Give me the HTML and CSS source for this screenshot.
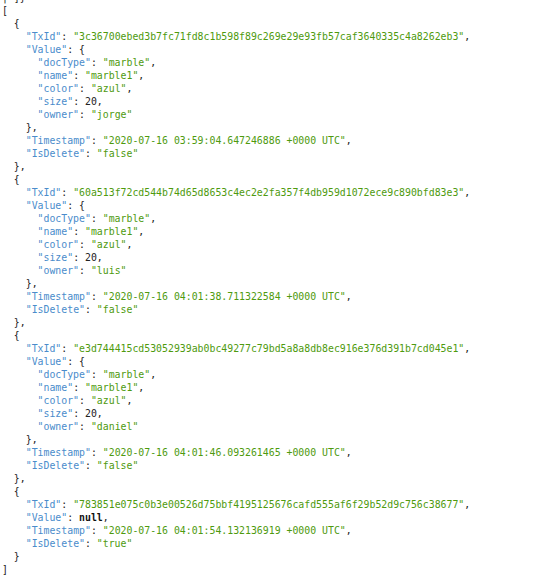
FILE: index.html
```html
<!DOCTYPE html>
<html>
<head>
<meta charset="utf-8">
<link rel="stylesheet" href="styles.css">
</head>
<body>
<pre class="json"><span class="cut">| ]}</span>
[
  {
    <span class="k">"TxId"</span>: <span class="s">"3c36700ebed3b7fc71fd8c1b598f89c269e29e93fb57caf3640335c4a8262eb3"</span>,
    <span class="k">"Value"</span>: {
      <span class="k">"docType"</span>: <span class="s">"marble"</span>,
      <span class="k">"name"</span>: <span class="s">"marble1"</span>,
      <span class="k">"color"</span>: <span class="s">"azul"</span>,
      <span class="k">"size"</span>: 20,
      <span class="k">"owner"</span>: <span class="s">"jorge"</span>
    },
    <span class="k">"Timestamp"</span>: <span class="s">"2020-07-16 03:59:04.647246886 +0000 UTC"</span>,
    <span class="k">"IsDelete"</span>: <span class="s">"false"</span>
  },
  {
    <span class="k">"TxId"</span>: <span class="s">"60a513f72cd544b74d65d8653c4ec2e2fa357f4db959d1072ece9c890bfd83e3"</span>,
    <span class="k">"Value"</span>: {
      <span class="k">"docType"</span>: <span class="s">"marble"</span>,
      <span class="k">"name"</span>: <span class="s">"marble1"</span>,
      <span class="k">"color"</span>: <span class="s">"azul"</span>,
      <span class="k">"size"</span>: 20,
      <span class="k">"owner"</span>: <span class="s">"luis"</span>
    },
    <span class="k">"Timestamp"</span>: <span class="s">"2020-07-16 04:01:38.711322584 +0000 UTC"</span>,
    <span class="k">"IsDelete"</span>: <span class="s">"false"</span>
  },
  {
    <span class="k">"TxId"</span>: <span class="s">"e3d744415cd53052939ab0bc49277c79bd5a8a8db8ec916e376d391b7cd045e1"</span>,
    <span class="k">"Value"</span>: {
      <span class="k">"docType"</span>: <span class="s">"marble"</span>,
      <span class="k">"name"</span>: <span class="s">"marble1"</span>,
      <span class="k">"color"</span>: <span class="s">"azul"</span>,
      <span class="k">"size"</span>: 20,
      <span class="k">"owner"</span>: <span class="s">"daniel"</span>
    },
    <span class="k">"Timestamp"</span>: <span class="s">"2020-07-16 04:01:46.093261465 +0000 UTC"</span>,
    <span class="k">"IsDelete"</span>: <span class="s">"false"</span>
  },
  {
    <span class="k">"TxId"</span>: <span class="s">"783851e075c0b3e00526d75bbf4195125676cafd555af6f29b52d9c756c38677"</span>,
    <span class="k">"Value"</span>: <span class="n">null</span>,
    <span class="k">"Timestamp"</span>: <span class="s">"2020-07-16 04:01:54.132136919 +0000 UTC"</span>,
    <span class="k">"IsDelete"</span>: <span class="s">"true"</span>
  }
]</pre>
</body>
</html>
```
FILE: styles.css
```css
html, body {
  margin: 0;
  padding: 0;
  background: #ffffff;
}
.json {
  margin: -9px 0 0 2px;
  font-family: "DejaVu Sans Mono", monospace;
  font-size: 9.85px;
  line-height: 13px;
  color: #222222;
}
.k { color: #4a8ccb; }
.s { color: #4e9a0e; }
.n { color: #111111; font-weight: 600; }
```
